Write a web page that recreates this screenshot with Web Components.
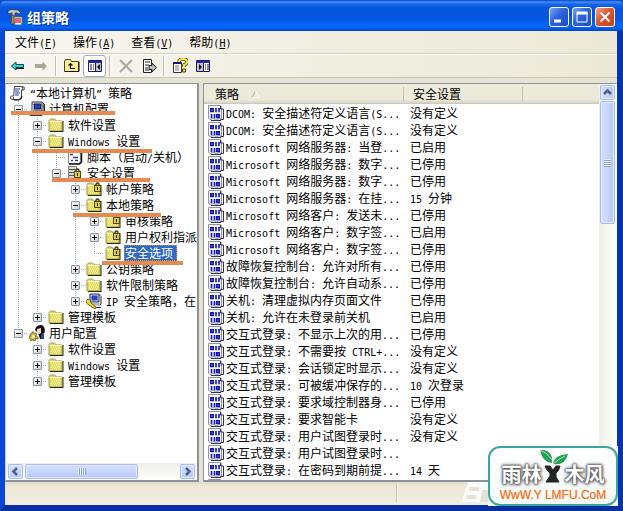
<!DOCTYPE html>
<html lang="zh-CN">
<head>
<meta charset="utf-8">
<title>组策略</title>
<style>
html, body { margin: 0; height: 100%; }
body { font: 12px/16px "Noto Sans CJK SC", "Liberation Sans", sans-serif; color: #000; overflow: hidden; }
</style>
</head>
<body>
<xp-window></xp-window>
<script>
const esc = s => s.replace(/&/g, '&amp;').replace(/</g, '&lt;');
/* Half-width runs get a monospaced face that is half as wide as one Chinese glyph. */
const mix = s => esc(s).replace(/[\x20-\x7e“”]+/g, m => `<span class="half">${m}</span>`);
const HALF = `.half{font-family:"DejaVu Sans Mono","Liberation Mono",monospace;font-size:10px;line-height:1px;white-space:pre}`;
const svg = (body, w = 16, h = 16) => `<svg width="${w}" height="${h}" viewBox="0 0 ${w} ${h}" aria-hidden="true">${body}</svg>`;
const dither = `<path d="M3 6h1M5 6h1M7 6h1M9 6h1M11 6h1M4 8h1M6 8h1M8 8h1M10 8h1M12 8h1M3 10h1M5 10h1M7 10h1M9 10h1M11 10h1M4 12h1M6 12h1M8 12h1M10 12h1" stroke="#fffbd0"/>`;
const folderBody = `<path d="M1 3.500L2.500 2h4L8 3.500V4h6v10H1z" fill="#e3dc62" stroke="#a29a48"/>${dither}<path d="M1.500 4.500h12" stroke="#fffac0"/><path d="M15 4v11M2 14.500h13" stroke="#29280c" fill="none"/>`;
const lock = (x, y) => `<g transform="translate(${x} ${y})"><path d="M2 4V2.500Q2 1 3.500 1T5 2.500V4" fill="none" stroke="#3c3a12" stroke-width="1.400"/><rect x=".5" y="3.500" width="6" height="6" fill="#e1cf35" stroke="#4c4815"/><path d="M3.500 5v3" stroke="#111"/></g>`;
const ICONS = {
  scroll: svg(`<path d="M4.500 1.500h8q2 0 2 2t-2 1.500h-1v6q0 3-3 3.500H2.500q-2 0-2-2t2-1.500h1.200L4 6z" fill="#fff" stroke="#444"/><path d="M12 2q2 1 0 3M3 12q1 1 0 2" stroke="#333" fill="none"/><path d="M5 4h5M5 6h4M5 8h5M5 10h4" stroke="#283d9c"/><path d="M4 15h5q3-.5 3-4" stroke="#111" fill="none"/>`),
  computer: svg(`<path d="M3 1h10v9H3z" fill="#d9d9d4" stroke="#333"/><path d="M5 3h6.500v5H5z" fill="#2544b8" stroke="#071b62"/><path d="M13.500 1.500l2 2v8l-2 1" fill="#777" stroke="#222"/><path d="M1 10.500h12v4H1z" fill="#d0d0ca" stroke="#333"/><path d="M7 12.500h4" stroke="#333"/><path d="M3 4h2v8H3z" fill="#a6a8c6"/>`),
  folder: svg(folderBody),
  lockfolder: svg(folderBody + lock(8, 1)),
  script: svg(`<path d="M1.500 1.500h12v10q0 3-2 3H1.500z" fill="#fff" stroke="#8a8a8a"/><path d="M14.500 1v12l-2 2H2" fill="none" stroke="#111" stroke-width="1.500"/><path d="M3 5.500h3M6 8.500h5M4 11.500h2M8 11.500h3" stroke="#2338ad" stroke-width="1.500"/>`),
  server: svg(`<path d="M1.500 1.500h8v13h-8z" fill="#d5d5d2" stroke="#85857f"/><path d="M2 4.500h7M2 7.500h7M2 10.500h7" stroke="#555"/>` + lock(7, 3)),
  ipsec: svg(`<path d="M4 1h9v8H4z" fill="#ccd" stroke="#334"/><path d="M5.500 2.500h6v5h-6z" fill="#2847c8"/><path d="M13 1.500l2 2v7l-1 2H6v2h9" fill="none" stroke="#222"/><path d="M6 10h8v3H6z" fill="#bbc"/><path d="M0 7.500Q2 5 4 7l1 3 5 4-1 2-6-4Q0 11 0 7.500z" fill="#e9de35" stroke="#77701c"/>`),
  users: svg(`<path d="M6 5q1-5 6-5 5 1 3.500 8L13 9l2 5h-4l-2-6z" fill="#111"/><path d="M8 4l4-1v5q-2 2-4 0z" fill="#f2cfbf"/><path d="M12 10l3-2v6h-3z" fill="#263fae"/><path d="M3 7h2v2l2-1 1 2-2 1 3 1v2l-3-1 1 2-2 1-1-2-1 2H1l1-2-2-1v-2h2L1 9l2-.5z" fill="#d8c43b" stroke="#5a5116" stroke-width=".7"/><circle cx="4.500" cy="11.500" r="1.200" fill="#fff"/>`),
  policy: svg(`<path d="M.5.500h12l1 2v12l-2-1-3 1-3-1-3 1-2-1z" fill="#f6f6ff" stroke="#8d93ad"/><path d="M12.500 1v3h3v10.500h-3M3 15.500h10" fill="none" stroke="#30344c"/><g fill="none" stroke="#1012b4" stroke-width="1.600"><rect x="2.800" y="3.800" width="2.400" height="2.600"/><path d="M8 3v4.200M11 3v4.200M3.500 9v4.200M6.500 9v4.200"/><rect x="8.800" y="9.800" width="2.400" height="2.600"/></g>`),
  back: svg(`<path d="M1.500 8L6 4v2.500h7.500v3H6V12z" fill="#35cfd0" stroke="#104a50"/><path d="M6 10.500h8" stroke="#111"/>`),
  forward: svg(`<path d="M14 8L9.500 3.500V6H2v4h7.500v2.500z" fill="#aaa99b"/>`),
  up: svg(`<path d="M.5 3.500l1-2h5l1 2h7v10H.5z" fill="#fbf18b" stroke="#4b4717"/><path d="M1 13.500h14V4" fill="none" stroke="#111"/><path d="M6.500 5.500v5H11M4.500 7.500l2-2 2 2" fill="none" stroke="#111" stroke-width="1.200"/>`),
  panes: svg(`<path d="M1.500 2.500h13v11h-13z" fill="#fff" stroke="#17177a"/><path d="M1 3h14v2H1z" fill="#2626a0"/><path d="M8.500 5v8" stroke="#17177a"/><path d="M3 7h2M3 9h2M3 11h2M6 7h1M6 9h1M6 11h1" stroke="#111"/><path d="M9 5h5v8H9z" fill="#c7c4ba"/><path d="M13 6v6L10 9z" fill="#111"/>`),
  remove: svg(`<path d="M2 2l12 12M14 2L2 14" stroke="#aaa99b" stroke-width="2"/>`),
  exportlist: svg(`<path d="M2.500 1.500h8v13h-8z" fill="#fff" stroke="#222"/><path d="M4 4h5M4 7h4M4 10h3M4 12h4" stroke="#222"/><path d="M8 7.500h3V5l4.500 4.500L11 14v-2.500H8z" fill="#bbb" stroke="#222"/>`),
  help: svg(`<path d="M1.500 4.500h8v10h-8z" fill="#fff" stroke="#333"/><path d="M3 8h4M3 10h4M3 12h4" stroke="#777"/><path d="M1 5h8" stroke="#17177a" stroke-width="2"/><path d="M7 4q0-3 4-3t4 3q0 2-3 3v2" fill="none" stroke="#4f490e" stroke-width="3.500"/><path d="M7 4q0-3 4-3t4 3q0 2-3 3v2M12 11v2" fill="none" stroke="#f4e644" stroke-width="2"/><path d="M10.500 11h3v3h-3z" fill="#f4e644" stroke="#4f490e"/>`),
  panes2: svg(`<path d="M1.500 2.500h13v11h-13z" fill="#fff" stroke="#17177a"/><path d="M1 3h14v2H1z" fill="#2626a0"/><path d="M2 5h6v8H2z" fill="#c7c4ba"/><path d="M8.500 5v8" stroke="#17177a"/><path d="M4 6v6l3-3z" fill="#111"/><path d="M10 7h1M10 9h1M10 11h1M12 7h2M12 9h2M12 11h2" stroke="#111"/>`),
  gpedit: svg(`<path d="M1 2l3-1.500 7 .5 3 3-2 1-2-1H8v3L5 6V4L1 5z" fill="#bec5c5" stroke="#333" stroke-width=".7"/><path d="M5 6l2 .5V15H4z" fill="#b78a54" stroke="#553512" stroke-width=".6"/><path d="M7 8h8v6l-1 2H8z" fill="#fff" stroke="#774"/><path d="M9 9v5M11 9v5M13 9v5" stroke="#bd1e42" stroke-width="1.300"/>`)
};
const RESET = `*{box-sizing:border-box}button{font:inherit;color:inherit;padding:0;margin:0;border:0;background:none}svg{display:block;flex:none}`;
function define(name, render) {
  customElements.define(name, class extends HTMLElement {
    connectedCallback() {
      if (this.shadowRoot) return;
      this.attachShadow({ mode: 'open' }).innerHTML = `<style>${RESET}${HALF}</style>` + render(this);
    }
  });
}

define('xp-titlebar', () => `<style>
:host{display:flex;align-items:center;height:31px;padding:4px 8px 1px 7px;gap:4px;background:linear-gradient(#0a3fc4 0,#3f8ffb 2px,#1b68ec 4px,#0655dd 8px,#0455e2 18px,#0565fb 25px,#0460f4 28px,#0343c6 31px);border-radius:6px 6px 0 0}
h1{flex:1;margin:0;font-size:14px;line-height:20px;font-weight:700;color:#fff;text-shadow:1px 1px #0b2f8a}
.buttons{display:flex;gap:3px}
button{width:20px;height:20px;border:1px solid #fff;border-radius:3px;background:linear-gradient(135deg,#7ba4f6,#2e62dd 45%,#1d4cc4)}
button.close{background:linear-gradient(135deg,#f0a58c,#dc5733 45%,#c43c18)}
</style>${ICONS.gpedit}<h1>组策略</h1><div class="buttons">
<button aria-label="最小化">${svg('<path d="M4 13h7" stroke="#fff" stroke-width="3"/>', 18, 18)}</button>
<button aria-label="最大化">${svg('<path d="M4 5h10v9H4z" fill="none" stroke="#fff"/><path d="M3.500 5h11" stroke="#fff" stroke-width="3"/>', 18, 18)}</button>
<button class="close" aria-label="关闭">${svg('<path d="M4.500 4.500l9 9M13.500 4.500l-9 9" stroke="#fff" stroke-width="2"/>', 18, 18)}</button></div>`);

define('menu-bar', () => `<style>
:host{display:flex;height:23px;padding-left:2px;align-items:center;border-bottom:1px solid #d5d1c0}
button{padding:0 8px;height:20px;line-height:20px;white-space:nowrap}
</style>` + [['文件', 'F'], ['操作', 'A'], ['查看', 'V'], ['帮助', 'H']].map(([t, k]) =>
  `<button>${t}<span class="half">(<u>${k}</u>)</span></button>`).join(''));

define('tool-bar', () => {
  const b = (icon, label, c = '') => `<button class="${c}" aria-label="${label}">${ICONS[icon]}</button>`;
  return `<style>
:host{display:flex;height:24px;padding-left:1px;align-items:center;border-top:1px solid #fff;border-bottom:1px solid #c9c5b4}
button{width:23px;height:22px;display:grid;place-items:center}
.on{background:#fff;border:1px solid #98b0cd;border-radius:3px}
i{width:2px;height:20px;margin:0 3px;border-left:1px solid #c4c0b0;border-right:1px solid #fff}
</style>${b('back', '后退')}${b('forward', '前进')}<i></i>${b('up', '上移一级')}${b('panes', '显示控制台树', 'on')}<i></i>${b('remove', '删除')}${b('exportlist', '导出列表')}<i></i>${b('help', '帮助')}${b('panes2', '显示操作窗格')}`;
});

define('xp-scrollbar', el => {
  const v = el.hasAttribute('vertical');
  const arrow = d => svg(`<path d="${d}" fill="none" stroke="#4d6185" stroke-width="2.500"/>`, 13, 13);
  return `<style>
:host{display:flex;flex:none;flex-direction:${v ? 'column' : 'row'};${v ? 'width:17px;padding:1px' : 'height:17px;padding:1px 2px'};background:linear-gradient(${v ? '90deg' : '180deg'},#f0efe8,#fefefb)}
button,.thumb{border:1px solid #a9bff0;border-radius:2px;background:linear-gradient(${v ? '90deg' : '180deg'},#d4e0fe,#c3d3fd 60%,#b5c7f3);box-shadow:inset 0 0 0 1px #dfe8ff;display:grid;place-items:center;flex:none}
button{width:15px;height:15px}
.thumb{${v ? 'height:var(--thumb);margin:1px 0' : 'width:var(--thumb);margin:0 2px'}}
.grip{${v ? 'width:7px;height:8px' : 'width:8px;height:7px'};background:repeating-linear-gradient(${v ? '180deg' : '90deg'},#eef4fe 0 1px,#8ba6df 1px 2px)}
.rest{flex:1}
</style><button aria-label="${v ? '向上' : '向左'}">${arrow(v ? 'M3 8l3.500-3.500L10 8' : 'M8 3L4.500 6.500 8 10')}</button><div class="thumb"><div class="grip"></div></div><div class="rest"></div><button aria-label="${v ? '向下' : '向右'}">${arrow(v ? 'M3 5l3.500 3.500L10 5' : 'M5 3l3.500 3.500L5 10')}</button>`;
});

/* guides: one letter per indent column: "|" passes, "T" branches, "L" ends, "." is empty. */
define('tree-row', el => {
  const g = el.getAttribute('guides') || '', state = el.getAttribute('state');
  return `<style>
:host{display:flex;height:16px;align-items:center;white-space:nowrap}
.g{width:19px;height:16px;flex:none;display:grid;place-items:center;--v:repeating-linear-gradient(#aaa 0 1px,#fff0 1px 2px);--h:repeating-linear-gradient(90deg,#aaa 0 1px,#fff0 1px 2px)}
.pass{background:var(--v) 9px 0/1px 16px no-repeat}
.tee{background:var(--v) 9px 0/1px 16px no-repeat,var(--h) 9px 8px/10px 1px no-repeat}
.end{background:var(--v) 9px 0/1px 8px no-repeat,var(--h) 9px 8px/10px 1px no-repeat}
button{width:9px;height:9px;border:1px solid #8096ae;border-radius:1px;background:linear-gradient(135deg,#fff,#d5cfc2)}
.icon{margin:0 3px 0 1px}
.label{padding:0 1px;line-height:16px}
:host([selected]) .label{background:#316ac5;color:#fff;outline:1px dotted #c9933a;outline-offset:-1px;padding-right:4px}
</style>` + [...g].map((c, i) => `<span class="g ${{ '|': 'pass', T: 'tee', L: 'end' }[c] || ''}">${i === g.length - 1 && state ?
    `<button aria-label="${state === '+' ? '展开' : '折叠'}">${svg(`<path d="M1 3.500h5${state === '+' ? 'M3.500 1v5' : ''}" stroke="#000"/>`, 7, 7)}</button>` : ''}</span>`).join('') +
    `<span class="icon">${ICONS[el.getAttribute('icon')]}</span><span class="label">${mix(el.getAttribute('label'))}</span>`;
});

const f = (label, icon = 'folder', state = '+') => ({ label, icon, state });
const TREE = { label: '“本地计算机” 策略', icon: 'scroll', kids: [
  { ...f('计算机配置', 'computer', '-'), kids: [
    f('软件设置'),
    { ...f('Windows 设置', 'folder', '-'), kids: [
      f('脚本（启动/关机）', 'script', ''),
      { ...f('安全设置', 'server', '-'), kids: [
        f('帐户策略', 'lockfolder'),
        { ...f('本地策略', 'lockfolder', '-'), kids: [
          f('审核策略', 'lockfolder'), f('用户权利指派', 'lockfolder'),
          { ...f('安全选项', 'lockfolder', ''), selected: true }] },
        f('公钥策略'), f('软件限制策略'), f('IP 安全策略，在', 'ipsec')] }] },
    f('管理模板')] },
  { ...f('用户配置', 'users', '-'), kids: [f('软件设置'), f('Windows 设置'), f('管理模板')] }] };
function rows(n, guides = '') {
  const inherited = guides.replace(/T$/, '|').replace(/L$/, '.');
  return `<tree-row guides="${guides}" icon="${n.icon}" state="${n.state || ''}" label="${n.label}"${n.selected ? ' selected' : ''}></tree-row>` +
    (n.kids || []).map((k, i, a) => rows(k, inherited + (i === a.length - 1 ? 'L' : 'T'))).join('');
}
/* Orange underlines laid over the tree: left, top, width. */
const MARKS = [[5, 27, 104], [26, 65, 120], [46, 94, 98], [67, 129, 88], [96, 177, 81]];
define('policy-tree', () => `<style>
:host{display:flex;flex-direction:column;min-width:0;background:#fff;border:1px solid #8b9299;border-left-color:#c4c8cc;border-width:1px 2px 2px 1px;overflow:hidden}
.view{position:relative;flex:1;min-height:0;overflow:hidden;padding:1px 0 0 3px}
.mark{position:absolute;height:4px;background:#e78a52}
</style><div class="view">${rows(TREE)}${MARKS.map(([x, y, w]) => `<div class="mark" style="left:${x}px;top:${y}px;width:${w}px"></div>`).join('')}</div><xp-scrollbar style="--thumb:113px"></xp-scrollbar>`);

const DATA = [
['DCOM: 安全描述符定义语言(S...', '没有定义'], ['DCOM: 安全描述符定义语言(S...', '没有定义'],
['Microsoft 网络服务器: 当登...', '已启用'], ['Microsoft 网络服务器: 数字...', '已停用'],
['Microsoft 网络服务器: 数字...', '已停用'], ['Microsoft 网络服务器: 在挂...', '15 分钟'],
['Microsoft 网络客户: 发送未...', '已停用'], ['Microsoft 网络客户: 数字签...', '已启用'],
['Microsoft 网络客户: 数字签...', '已停用'], ['故障恢复控制台: 允许对所有...', '已停用'],
['故障恢复控制台: 允许自动系...', '已停用'], ['关机: 清理虚拟内存页面文件', '已停用'],
['关机: 允许在未登录前关机', '已启用'], ['交互式登录: 不显示上次的用...', '已停用'],
['交互式登录: 不需要按 CTRL+...', '没有定义'], ['交互式登录: 会话锁定时显示...', '没有定义'],
['交互式登录: 可被缓冲保存的...', '10 次登录'], ['交互式登录: 要求域控制器身...', '已停用'],
['交互式登录: 要求智能卡', '没有定义'], ['交互式登录: 用户试图登录时...', '没有定义'],
['交互式登录: 用户试图登录时...', ''], ['交互式登录: 在密码到期前提...', '14 天'], ['', '']];
define('policy-list', () => `<style>
:host{display:flex;min-width:0;background:#fff;border:1px solid #8b9299;border-bottom-width:2px;border-right-color:#fff;overflow:hidden}
.view{flex:1;min-width:0;overflow:hidden}
table{width:100%;border-collapse:collapse;table-layout:fixed}
th{height:20px;padding:0 0 0 11px;text-align:left;font-weight:400;background:linear-gradient(#ebeadb 0,#ebeadb 16px,#d6d2c2 19px,#c5c1b0 20px)}
th+th{padding-left:9px}
th>span{display:flex;align-items:center;height:14px;border-right:1px solid #c5c1b0;box-shadow:1px 0 #fff}
th:last-child>span{border:0;box-shadow:none}
th svg{margin-left:12px}
td{padding:0 0 0 6px}
td:first-child{padding-left:4px}
.cell{display:flex;align-items:center;height:17px;line-height:17px;gap:2px;white-space:nowrap;overflow:hidden}
</style><div class="view"><table><colgroup><col style="width:200px"><col style="width:119px"><col></colgroup>
<thead><tr><th><span>策略${svg('<path d="M1 7.500L4.500 1" stroke="#aca899" fill="none"/><path d="M4.500 1L8 7.500H1" stroke="#fff" fill="none"/>', 9, 9)}</span></th><th><span>安全设置</span></th><th><span></span></th></tr></thead>
<tbody>${DATA.map(([a, b]) => `<tr><td><div class="cell">${ICONS.policy}<span>${mix(a)}</span></div></td><td><div class="cell"><span>${mix(b)}</span></div></td><td></td></tr>`).join('')}</tbody></table></div>
<xp-scrollbar vertical style="--thumb:123px"></xp-scrollbar>`);

define('status-bar', () => `<style>
:host{display:flex;height:23px;padding:2px 0;background:linear-gradient(#dedbca,#ece9d8 4px,#f1eee0)}
div{border-right:1px solid #c4c0b0;box-shadow:1px 0 #fff}
.main{flex:392}.side{flex:110}.end{flex:110;border:0}
</style><div class="main"></div><div class="side"></div><div class="end"></div>`);

define('site-badge', () => `<style>
:host{display:flex;align-items:flex-end}
.box{width:130px;height:60px;background:#fff}
.card{height:100%;border:2px solid #3aa59d;border-radius:12px;background:linear-gradient(#fff,#f1f8f6);display:flex;flex-direction:column;align-items:center;padding-top:12px}
.name{display:flex;align-items:center;height:28px;color:#fff;font-weight:700;font-size:20px;line-height:28px;text-shadow:0 0 2px #555,0 0 2px #555,0 0 3px #666,0 0 4px #888,1px 1px 3px #888}
.name svg{margin:-17px -4px 0 -3px}
a{color:#f07020;text-decoration:none;font:12px/14px "Liberation Sans",sans-serif;white-space:pre;text-shadow:0 0 1px #f5b48a}
</style>${svg('<path d="M6 2h20v20H0L3 10z" fill="#fff" opacity=".85"/><path d="M8 7h9v4H7zM5 15h9v4H4zM20 10h6v12h-8z" fill="#e4e2d8"/>', 26, 26)}
<div class="box"><div class="card"><div class="name"><span>雨林</span>${svg('<path d="M1 2q10-1 12 8v5Q3 14 1 2z" fill="#23a052"/><path d="M1 2q8 3 12 10" stroke="#fff" fill="none" stroke-width=".7"/><path d="M14 16q1-9 15-10-3 12-15 10z" fill="#23a052"/><path d="M14 16q7-6 12-8" stroke="#fff" fill="none" stroke-width=".7"/><path d="M6 18h5l3 4 3-4h4q-1 5-4 7v4l3 5H7l4-6v-3q-4-3-5-7z" fill="#252525" stroke="#252525"/>', 30, 36)}<span>木风</span></div><a href="#">WwW.Y LMFU.CoM</a></div></div>`);

define('xp-window', () => `<style>
:host{display:flex;flex-direction:column;height:100vh;background:#0a46c8;position:relative}
.client{flex:1;min-height:0;display:flex;flex-direction:column;border:solid #0a3fca;border-width:0 6px 6px 5px;border-left-color:#0b47d6;border-bottom-color:#062f9f;border-right-color:#0334b5;background:#ece9d8}
.bars{background:linear-gradient(90deg,#f8f6f0,#f1efe3 45%,#ece9d8)}
.panes{flex:1;min-height:0;display:grid;grid-template-columns:194px minmax(0,1fr);gap:4px;padding-top:5px;background:#e6e3d2}
site-badge{position:absolute;right:5px;bottom:5px}
</style><xp-titlebar></xp-titlebar><div class="client"><div class="bars"><menu-bar></menu-bar><tool-bar></tool-bar></div>
<div class="panes"><policy-tree></policy-tree><policy-list></policy-list></div><status-bar></status-bar></div><site-badge></site-badge>`);
</script>
</body>
</html>
